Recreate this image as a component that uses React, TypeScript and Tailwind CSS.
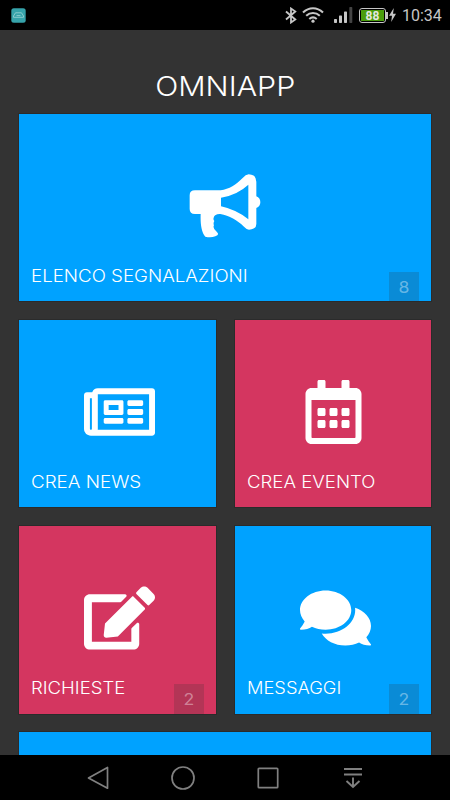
import type { ReactNode } from 'react'
import { FaComments, FaEdit, FaRegCalendarAlt, FaRegNewspaper } from 'react-icons/fa'

function StatusBar() {
  return (
    <div className="h-[30px] shrink-0 bg-black flex items-center pl-[11px] pr-[7px] text-[#c6c6c6]">
      <svg className="w-[15px] h-[15px]" viewBox="0 0 15 15" fill="none">
        <rect x=".3" y=".3" width="14.4" height="14.4" rx="2.5" fill="#36a3aa" />
        <path d="M4.5 4.8h6l2 3.2v1.3h-10V8zM5.5 7.6h4" stroke="#9ed5d5" strokeWidth=".8" />
      </svg>
      <svg className="ml-auto w-[12px] h-[17px]" viewBox="0 0 12 17" fill="none" stroke="currentColor" strokeWidth="1.8">
        <path d="M1 4.5l9.3 8L6 15.5v-14l4.3 3-9.3 8" />
      </svg>
      <svg className="ml-[5px] w-[22px] h-[16px]" viewBox="0 0 22 16" fill="none" stroke="currentColor" strokeWidth="2.1">
        <path d="M1 5.5C7-.2 15-.2 21 5.5M4.2 8.8c4-3.7 9.6-3.7 13.6 0M7.3 12c2.2-1.9 5.2-1.9 7.4 0" />
        <circle cx="11" cy="14.2" r="1.6" fill="currentColor" stroke="none" />
      </svg>
      <svg className="ml-[10px] w-[19px] h-[16px]" viewBox="0 0 19 16" fill="currentColor">
        <rect x="0" y="12" width="3" height="4" rx=".7" />
        <rect x="5" y="8.5" width="3" height="7.5" rx=".7" />
        <rect x="10" y="4.5" width="3" height="11.5" rx=".7" />
        <rect x="15.3" y="0" width="3" height="16" rx=".7" fill="#444" />
      </svg>
      <div className="ml-[6px] w-[27px] h-[15px] rounded-[3px] border border-[#c6c6c6] p-px">
        <div className="h-full bg-[#4a9d0c] flex items-center justify-center font-['Roboto',sans-serif] font-bold text-[12px] leading-none text-[#e4e8df]">
          <span className="pt-px">88</span>
        </div>
      </div>
      <div className="w-[2px] h-[7px] bg-[#c6c6c6]" />
      <svg className="ml-px w-[7px] h-[14px]" viewBox="0 0 7 14" fill="currentColor">
        <path d="M4.8 0L0 7.7h3L2.2 14 7 5.8H4z" />
      </svg>
      <span className="ml-[6px] w-[41px] whitespace-nowrap font-['Roboto',sans-serif] text-[16px] leading-none pt-px">10:34</span>
    </div>
  )
}

function Bullhorn() {
  return (
    <svg className="w-[72px] h-[64px]" viewBox="0 0 216 192" fill="#fff">
      <path
        fillRule="evenodd"
        d="M18 49H95C120 46 142 31 161 12Q170 1 179 1Q202 2 202 23V67Q214 72 214 85Q214 97 202 102V150Q202 166 180 167Q172 166 165 158C145 139 121 124 94 120Q77 119 74 131Q72 138 76 141Q72 148 75 154Q70 163 83 173Q93 183 79 187Q65 192 49 188C36 174 34 145 35 120H18Q2 120 2 105V64Q2 49 18 49ZM96 71V97Q142 107 178 136V32Q145 63 96 71Z"
      />
    </svg>
  )
}

type TileProps = {
  label: string
  labelClass: string
  color: string
  icon: ReactNode
  iconPad?: string
  badge?: number
  wide?: boolean
}

function Tile({ label, labelClass, color, icon, iconPad = '', badge, wide }: TileProps) {
  return (
    <div className={`h-[187.8px] relative flex flex-col ring-1 ring-black/15 ${color} ${wide ? 'col-span-2' : ''}`}>
      <div className={`pt-[60.5px] flex justify-center text-white ${iconPad}`}>{icon}</div>
      <div className="mt-auto mb-[13.5px] pl-[12px]">
        <span
          className={`inline-block origin-left font-['Inter','Liberation_Sans',sans-serif] font-light text-[17px] leading-[22px] text-white whitespace-nowrap ${labelClass}`}
        >
          {label}
        </span>
      </div>
      {badge !== undefined && (
        <span className="absolute right-[12px] bottom-0 w-[30.5px] h-[29.5px] flex items-center justify-center bg-[#333]/20 font-['Inter','Liberation_Sans',sans-serif] text-[16px] leading-none text-white/40">
          <span className="scale-x-110">{badge}</span>
        </span>
      )}
    </div>
  )
}

function NavBar() {
  return (
    <div className="h-[45px] shrink-0 bg-black grid grid-cols-[repeat(4,85px)] items-center pl-[55px]">
      <svg className="w-[24px] h-[24px] mx-auto" viewBox="0 0 24 24" fill="none" stroke="#808080" strokeWidth="1.7" strokeLinejoin="round">
        <path d="M21.5 1.5v20.7L2.5 12z" />
      </svg>
      <svg className="w-[24px] h-[24px] mx-auto" viewBox="0 0 24 24" fill="none" stroke="#808080" strokeWidth="1.7">
        <circle cx="12" cy="12" r="11" />
      </svg>
      <svg className="w-[24px] h-[24px] mx-auto" viewBox="0 0 24 24" fill="none" stroke="#808080" strokeWidth="1.7">
        <rect x="2.3" y="2.3" width="19.4" height="19.4" rx=".8" />
      </svg>
      <svg className="w-[24px] h-[24px] mx-auto" viewBox="0 0 24 24" fill="none" stroke="#808080" strokeWidth="1.9">
        <path d="M3 3h18M3 8.5h18M12 11.5v9.5M5.5 15l6.5 6 6.5-6" />
      </svg>
    </div>
  )
}

export default function App() {
  const iconClass = 'w-[71px] h-[64px]'

  return (
    <div className="w-[450px] h-[800px] overflow-hidden flex flex-col bg-[#333]">
      <StatusBar />
      <main className="flex-1 min-h-0 overflow-hidden">
        <h1 className="h-[83.5px] pt-[41px] text-center font-['Inter','Liberation_Sans',sans-serif] font-light text-[27px] leading-[32px] text-white">
          <span className="inline-block scale-x-[1.125]">OMNIAPP</span>
        </h1>
        <div className="pl-[18.5px] grid grid-cols-[197.5px_196.5px] gap-x-[18.9px] gap-y-[18.4px]">
          <Tile
            wide
            label="ELENCO SEGNALAZIONI"
            labelClass="scale-x-[1.1]"
            color="bg-[#00a2ff]"
            icon={<Bullhorn />}
            badge={8}
          />
          <Tile
            label="CREA NEWS"
            labelClass="scale-x-[1.105]"
            color="bg-[#00a2ff]"
            icon={<FaRegNewspaper className={iconClass} />}
            iconPad="pl-[5px]"
          />
          <Tile
            label="CREA EVENTO"
            labelClass="scale-x-[1.095]"
            color="bg-[#d43660]"
            icon={<FaRegCalendarAlt className={iconClass} />}
          />
          <Tile
            label="RICHIESTE"
            labelClass="scale-x-[1.09]"
            color="bg-[#d43660]"
            icon={<FaEdit className={iconClass} />}
            iconPad="pl-[5px]"
            badge={2}
          />
          <Tile
            label="MESSAGGI"
            labelClass="scale-x-[1.075]"
            color="bg-[#00a2ff]"
            icon={<FaComments className={iconClass} />}
            iconPad="pl-[4px]"
            badge={2}
          />
          <div className="col-span-2 h-[187.8px] bg-[#00a2ff] ring-1 ring-black/15" />
        </div>
      </main>
      <NavBar />
    </div>
  )
}
